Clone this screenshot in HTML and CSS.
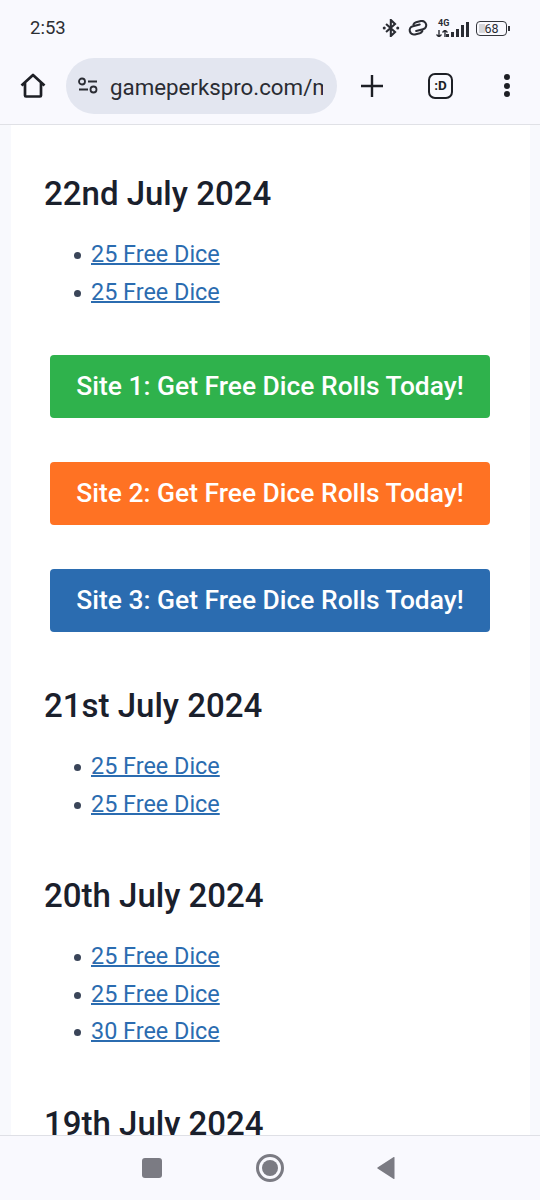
FILE: index.html
```html
<!DOCTYPE html>
<html lang="en">
<head>
<meta charset="utf-8">
<title>Free Dice</title>
<link rel="stylesheet" href="styles.css">
</head>
<body>
<div class="phone">
  <header class="chrome">
    <div class="status">
      <span class="time">2:53</span>
      <div class="status-icons">
        <svg class="ic-bt" viewBox="0 0 20 20" width="18" height="18"><path d="M4.500 5.500l10 9L9.800 19V1l4.700 4.500-10 9" fill="none" stroke="#2a2c33" stroke-width="2.300"/><circle cx="2.500" cy="10" r="1.700" fill="#2a2c33"/><circle cx="17.500" cy="10" r="1.700" fill="#2a2c33"/></svg>
        <svg class="ic-link" viewBox="0 0 22 16" width="22" height="16"><g transform="rotate(-14 11 8)" fill="none" stroke="#2a2c33" stroke-width="2.100" stroke-linecap="round"><path d="M13.500 5H6.500a4 4 0 0 0 0 8.500h5a4 4 0 0 0 3-1.500"/><path d="M8.500 10.500h7a4 4 0 0 0 0-8.500h-5a4 4 0 0 0-3 1.500"/></g></svg>
        <div class="signal">
          <div class="net">
            <span class="net-g">4G</span>
            <svg class="net-a" viewBox="0 0 12 7" width="12" height="7"><path d="M3 0v7M0.500 4.500L3 7l2.500-2.500M9 7V0M6.500 2.500L9 0l2.500 2.500" fill="none" stroke="#2a2c33" stroke-width="1.400"/></svg>
          </div>
          <div class="bars"><i class="b1"></i><i class="b2"></i><i class="b3"></i><i class="b4"></i><i class="b5"></i></div>
        </div>
        <div class="battery"><div class="batt-body"><span class="batt-fill"></span><span class="batt-num">68</span></div><span class="batt-tip"></span></div>
      </div>
    </div>
    <div class="toolbar">
      <svg class="ic-home" viewBox="0 0 28 28" width="28" height="28"><path d="M2.500 13.500L14 3l11.500 10.500M6 11v12.500a1 1 0 0 0 1 1h14a1 1 0 0 0 1-1V11" fill="none" stroke="#1d1f25" stroke-width="2.700" stroke-linejoin="round"/></svg>
      <div class="omnibox">
        <svg class="ic-tune" viewBox="0 0 22 18" width="22" height="18"><circle cx="5" cy="4.500" r="3" fill="none" stroke="#2a2c33" stroke-width="1.800"/><path d="M11 4.500h9M2 12.500h9" stroke="#2a2c33" stroke-width="1.800"/><circle cx="16.500" cy="12.500" r="3" fill="none" stroke="#2a2c33" stroke-width="1.800"/></svg>
        <span class="url">gameperkspro.com/m</span>
      </div>
      <svg class="ic-plus" viewBox="0 0 24 24" width="24" height="24"><path d="M12 1v22M1 12h22" stroke="#1d1f25" stroke-width="2.400"/></svg>
      <div class="tabs">:D</div>
      <div class="menu"><i></i><i></i><i></i></div>
    </div>
  </header>
  <main class="page">
    <article class="card">
      <h2>22nd July 2024</h2>
      <ul>
        <li><a href="#">25 Free Dice</a></li>
        <li><a href="#">25 Free Dice</a></li>
      </ul>
      <div class="cta-group">
        <a class="cta green" href="#">Site 1: Get Free Dice Rolls Today!</a>
        <a class="cta orange" href="#">Site 2: Get Free Dice Rolls Today!</a>
        <a class="cta blue" href="#">Site 3: Get Free Dice Rolls Today!</a>
      </div>
      <h2>21st July 2024</h2>
      <ul>
        <li><a href="#">25 Free Dice</a></li>
        <li><a href="#">25 Free Dice</a></li>
      </ul>
      <h2>20th July 2024</h2>
      <ul>
        <li><a href="#">25 Free Dice</a></li>
        <li><a href="#">25 Free Dice</a></li>
        <li><a href="#">30 Free Dice</a></li>
      </ul>
      <h2>19th July 2024</h2>
    </article>
  </main>
  <nav class="navbar">
    <span class="nav-square"></span>
    <span class="nav-circle"><span></span></span>
    <svg class="nav-back" viewBox="0 0 20 24" width="20" height="24"><path d="M18.500 1.500v21a.5.5 0 0 1-.8.4L1.500 12.400a.5.5 0 0 1 0-.8L17.700 1.100a.5.5 0 0 1 .8.400z" fill="#7b7b83"/></svg>
  </nav>
</div>
</body>
</html>
```
FILE: styles.css
```css
* { box-sizing: border-box; }
html, body { margin: 0; padding: 0; }
body { font-family: Roboto, "Liberation Sans", sans-serif; background: #f8f9fd; }
.phone { width: 540px; height: 1200px; display: flex; flex-direction: column; overflow: hidden; }

.chrome { height: 125px; flex: none; background: #f9f9fe; border-bottom: 1px solid #e0e1e6; }
.status { height: 47px; display: flex; align-items: center; justify-content: space-between; padding: 9px 30px 0 30px; }
.time { font-size: 18.500px; color: #2c2e33; }
.status-icons { display: flex; align-items: center; }
.ic-bt { margin-right: 7px; }
.ic-link { margin-right: 7px; }
.signal { display: flex; align-items: flex-end; height: 18px; margin-right: 7px; }
.net { display: flex; flex-direction: column; gap: 2px; width: 14px; font-size: 9px; font-weight: 700; line-height: 9px; color: #2a2c33; }
.net-g, .net-a { display: block; }
.net-g { margin-left: 2px; }
.bars { display: flex; align-items: flex-end; gap: 2px; margin-left: -4px; }
.bars i { display: block; width: 3px; background: #2a2c33; }
.b1 { height: 3px; } .b2 { height: 5px; } .b3 { height: 8px; } .b4 { height: 12px; } .b5 { height: 15px; }
.battery { display: flex; align-items: center; }
.batt-body { position: relative; width: 31px; height: 15px; border: 1px solid #33353b; border-radius: 4px; text-align: center; font-size: 12.500px; line-height: 13px; color: #2a2c33; }
.batt-fill { position: absolute; left: 2px; top: 2px; bottom: 2px; width: 6px; background: #d5d6da; }
.batt-num { position: relative; }
.batt-tip { width: 2px; height: 5px; margin-left: 1px; background: #33353b; }

.toolbar { height: 77px; display: flex; align-items: center; padding: 0 0 0 19px; }
.ic-home { flex: none; }
.omnibox { width: 271px; height: 56px; margin-left: 19px; border-radius: 28px; background: #e3e6f0; display: flex; align-items: center; padding-left: 11px; overflow: hidden; }
.ic-tune { flex: none; }
.url { margin-left: 11px; width: 213px; height: 28px; padding-top: 1px; font-size: 22.300px; line-height: 28px; color: #2a2c33; white-space: nowrap; overflow: hidden; }
.ic-plus { flex: none; margin-left: 23px; }
.tabs { flex: none; width: 25px; height: 26px; margin-left: 44px; border: 2.500px solid #1d1f25; border-radius: 7px; font-size: 13.500px; font-weight: 700; line-height: 21px; text-align: center; color: #1d1f25; }
.menu { flex: none; margin-left: 51px; display: flex; flex-direction: column; gap: 2.500px; }
.menu i { display: block; width: 6px; height: 6px; border-radius: 50%; background: #1d1f25; }

.page { flex: 1; min-height: 0; overflow: hidden; padding: 0 10px 0 11px; }
.card { background: #fff; height: 100%; padding: 0 33px; overflow: hidden; }
h2 { margin: 0; font-size: 33px; line-height: 40px; font-weight: 500; color: #1a202c; white-space: nowrap; }
.card > h2:first-child { margin-top: 49px; }
ul { margin: 22px 0 0 0; padding: 0 0 0 30px; list-style: none; }
ul + h2 { margin-top: 53px; }
li { display: flex; align-items: center; gap: 10px; font-size: 23.400px; line-height: 37.500px; }
li::before { content: ""; flex: none; width: 7px; height: 7px; margin-top: 2px; border-radius: 50%; background: #3a4559; }
a { color: #2b6cb0; text-decoration-thickness: 1.800px; }
.cta-group { display: flex; flex-direction: column; gap: 44px; margin: 44px 7px 0 6px; }
.cta-group + h2 { margin-top: 54px; }
.cta { display: block; height: 63px; border-radius: 4px; color: #fff; font-size: 26.400px; font-weight: 500; line-height: 63px; text-align: center; text-decoration: none; white-space: nowrap; }
.green { background: #2fb24c; }
.orange { background: #ff7223; }
.blue { background: #2b6cb0; }

.navbar { height: 65px; flex: none; background: #f9f9fe; border-top: 1px solid #dfe0e6; display: flex; align-items: center; justify-content: center; position: relative; }
.nav-square { position: absolute; left: 142px; top: 22px; width: 20px; height: 20px; border-radius: 3px; background: #7b7b83; }
.nav-circle { position: absolute; left: 256px; top: 18px; width: 28px; height: 28px; border: 3px solid #7b7b83; border-radius: 50%; display: flex; align-items: center; justify-content: center; }
.nav-circle span { width: 16px; height: 16px; border-radius: 50%; background: #7b7b83; }
.nav-back { position: absolute; left: 376px; top: 20px; }
```
